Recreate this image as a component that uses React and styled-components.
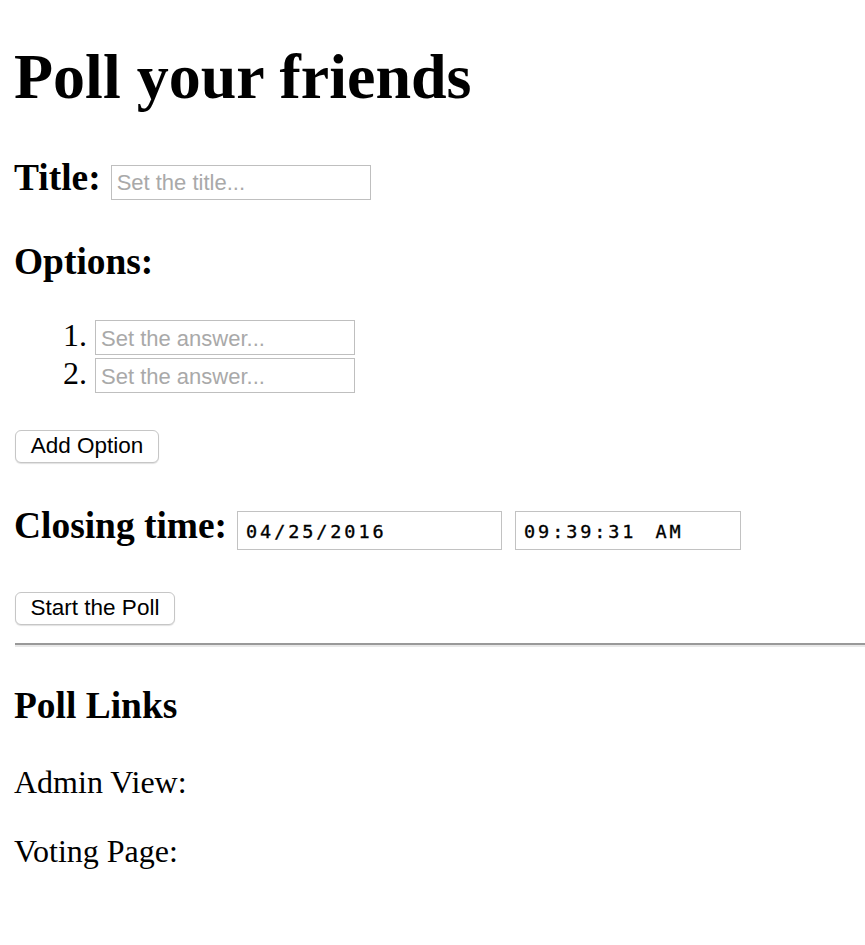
import React from "react";
import styled, { createGlobalStyle } from "styled-components";

// ===== Global =====

const GlobalStyle = createGlobalStyle`
  html, body {
    margin: 0;
    padding: 0;
    background: #ffffff;
    overflow: hidden;
  }
  body {
    font-family: "Liberation Serif", "Times New Roman", serif;
    color: #000;
  }
`;

// ===== Styled Components =====

const Page = styled.div`
  padding: 1px 0 0 14px;
  width: 851px;
`;

const Heading = styled.h1`
  font-size: 64px;
  font-weight: bold;
  margin: 39px 0 0;
  line-height: 74px;
`;

const FieldRow = styled.h3`
  display: flex;
  align-items: baseline;
  gap: ${(props) => props.gap || 10}px;
  font-size: 37.44px;
  font-weight: bold;
  line-height: 43px;
  margin: ${(props) => props.top || 42}px 0 0;
`;

const SectionTitle = styled.h3`
  font-size: 37.44px;
  font-weight: bold;
  line-height: 43px;
  margin: ${(props) => props.top || 37}px 0 0;
`;

const TextInput = styled.input`
  box-sizing: border-box;
  width: 260px;
  height: 35px;
  margin: 0;
  padding: 6px 5px 4px;
  border: 1px solid #bfbfbf;
  border-radius: 0;
  font-family: "Liberation Sans", Arial, sans-serif;
  font-size: 22px;
  line-height: 22px;
  font-weight: normal;
  color: #000;
  outline: none;

  &::placeholder {
    color: #a9a9a9;
  }
`;

const StampInput = styled.input`
  box-sizing: border-box;
  width: ${(props) => props.w}px;
  height: 39px;
  margin: 0 0 0 ${(props) => props.shift || 0}px;
  padding: 8px 7px 6px 8px;
  border: 1px solid #c2c2c2;
  border-radius: 0;
  font-family: "DejaVu Sans Mono", "Liberation Mono", monospace;
  font-size: 18.5px;
  line-height: 22px;
  font-weight: normal;
  letter-spacing: 2.9px;
  word-spacing: 5px;
  color: #000;
  -webkit-text-stroke: 0.35px #000;
  outline: none;
`;

const OptionList = styled.ol`
  margin: 34px 0 0;
  padding-left: 81px;
  font-size: 32px;
`;

const OptionItem = styled.li`
  line-height: 36.8px;
  height: 38px;

  & > input {
    vertical-align: baseline;
  }
`;

const Button = styled.button`
  display: block;
  box-sizing: border-box;
  width: ${(props) => props.w}px;
  height: 33px;
  margin: ${(props) => props.top || 37}px 0 0 1px;
  padding: 0;
  background: #ffffff;
  border: 1px solid #c6c6c6;
  border-radius: 6px;
  box-shadow: 0 1px 1px rgba(0, 0, 0, 0.12);
  font-family: "Liberation Sans", Arial, sans-serif;
  font-size: 22.5px;
  color: #000;
  cursor: pointer;
`;

const Rule = styled.hr`
  margin: 18px 0 0 1px;
  height: 0;
  border: none;
  border-top: 2px solid #999999;
  border-bottom: 2px solid #e8e8e8;
`;

const Line = styled.p`
  font-size: 32px;
  line-height: 36.8px;
  margin: ${(props) => props.top || 32}px 0 0;
`;

// ===== App =====

const App = () => {
  return (
    <Page>
      <GlobalStyle />
      <Heading>Poll your friends</Heading>

      <FieldRow top={42}>
        <span>Title:</span>
        <TextInput type="text" placeholder="Set the title..." />
      </FieldRow>

      <SectionTitle top={40}>Options:</SectionTitle>
      <OptionList>
        <OptionItem>
          <TextInput type="text" placeholder="Set the answer..." />
        </OptionItem>
        <OptionItem>
          <TextInput type="text" placeholder="Set the answer..." />
        </OptionItem>
      </OptionList>

      <Button top={37} w={144}>Add Option</Button>

      <FieldRow top={41}>
        <span>Closing time:</span>
        <StampInput w={265} type="text" defaultValue="04/25/2016" />
        <StampInput w={226} shift={3} type="text" defaultValue="09:39:31 AM" />
      </FieldRow>

      <Button top={42} w={160}>Start the Poll</Button>
      <Rule />

      <SectionTitle top={37}>Poll Links</SectionTitle>
      <Line top={37}>Admin View:</Line>
      <Line top={33}>Voting Page:</Line>
    </Page>
  );
};

export default App;
